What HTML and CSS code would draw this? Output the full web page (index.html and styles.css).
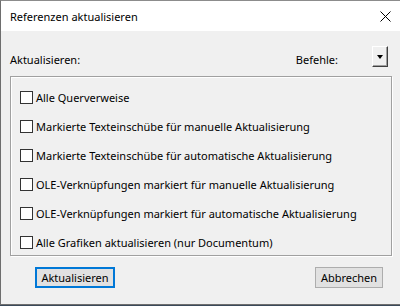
FILE: index.html
```html
<!DOCTYPE html>
<html lang="de">
<head>
    <meta charset="UTF-8">
    <title>Referenzen aktualisieren</title>
    <link rel="stylesheet" href="styles.css">
</head>
<body>
    <div class="window">
        <div class="titlebar">
            <span class="title">Referenzen aktualisieren</span>
            <svg class="close" width="11" height="11" viewBox="0 0 11 11">
                <path d="M0.5 0.5 L10.5 10.5 M10.5 0.5 L0.5 10.5" stroke="#000" stroke-width="1" fill="none"/>
            </svg>
        </div>

        <div class="header-row">
            <span class="label">Aktualisieren:</span>
            <span class="spacer"></span>
            <span class="label">Befehle:</span>
            <div class="drop-btn"><span class="arrow"></span></div>
        </div>

        <div class="group">
            <label class="check-row"><span class="check"></span>Alle Querverweise</label>
            <label class="check-row"><span class="check"></span>Markierte Texteinschübe für manuelle Aktualisierung</label>
            <label class="check-row"><span class="check"></span>Markierte Texteinschübe für automatische Aktualisierung</label>
            <label class="check-row"><span class="check"></span>OLE-Verknüpfungen markiert für manuelle Aktualisierung</label>
            <label class="check-row"><span class="check"></span>OLE-Verknüpfungen markiert für automatische Aktualisierung</label>
            <label class="check-row"><span class="check"></span>Alle Grafiken aktualisieren (nur Documentum)</label>
        </div>

        <div class="button-row">
            <button class="button default">Aktualisieren</button>
            <button class="button cancel">Abbrechen</button>
        </div>
    </div>
</body>
</html>
```

FILE: styles.css
```css
body {
    margin: 0;
    padding: 0;
    background: #3a4a5a;
    font-family: "Noto Sans", sans-serif;
    font-size: 11px;
    color: #000;
}
.window {
    width: 400px;
    height: 305px;
    box-sizing: border-box;
    background: #f0f0f0;
    border-top: 1px solid #8c8c8c;
    border-left: 1px solid #6e6e6e;
    border-bottom: 1px solid #6e6e6e;
}
.titlebar {
    height: 30px;
    background: #fff;
    display: flex;
    align-items: center;
    justify-content: space-between;
    padding: 0 9px 0 9px;
}
.close {
    margin-top: 1px;
}
.header-row {
    display: flex;
    align-items: center;
    height: 21px;
    margin-top: 15px;
    padding: 0 12px 0 9px;
}
.header-row .label {
    margin-top: 5px;
}
.spacer {
    flex: 1;
}
.drop-btn {
    width: 16px;
    height: 21px;
    margin-left: 34px;
    box-sizing: border-box;
    background: #f0f0f0;
    border: 1px solid;
    border-color: #fff #404040 #404040 #fff;
    box-shadow: inset -1px -1px 0 #a0a0a0;
    display: flex;
    align-items: center;
    justify-content: center;
}
.arrow {
    width: 0;
    height: 0;
    border-left: 3.5px solid transparent;
    border-right: 3.5px solid transparent;
    border-top: 4px solid #000;
}
.group {
    margin: 9px 0 0 9px;
    width: 382px;
    height: 180px;
    box-sizing: border-box;
    border: 1px solid #a0a0a0;
    box-shadow: 1px 1px 0 #fff, inset 1px 1px 0 #fff;
    padding: 10px 0 0 9px;
    display: flex;
    flex-direction: column;
    gap: 9px;
}
.check-row {
    display: flex;
    align-items: center;
    height: 20px;
}
.check {
    width: 13px;
    height: 13px;
    box-sizing: border-box;
    border: 1px solid #333;
    background: #fff;
    margin-right: 3px;
}
.button-row {
    display: flex;
    justify-content: space-between;
    margin-top: 11px;
    padding: 0 17px 0 34px;
}
.button {
    height: 21px;
    padding: 0 4px;
    font-family: inherit;
    font-size: 11px;
    background: #e1e1e1;
    border: 1px solid #adadad;
    color: #000;
}
.button.default {
    width: 80px;
    border: 2px solid #0078d7;
}
.button.cancel {
    width: 68px;
}
```
